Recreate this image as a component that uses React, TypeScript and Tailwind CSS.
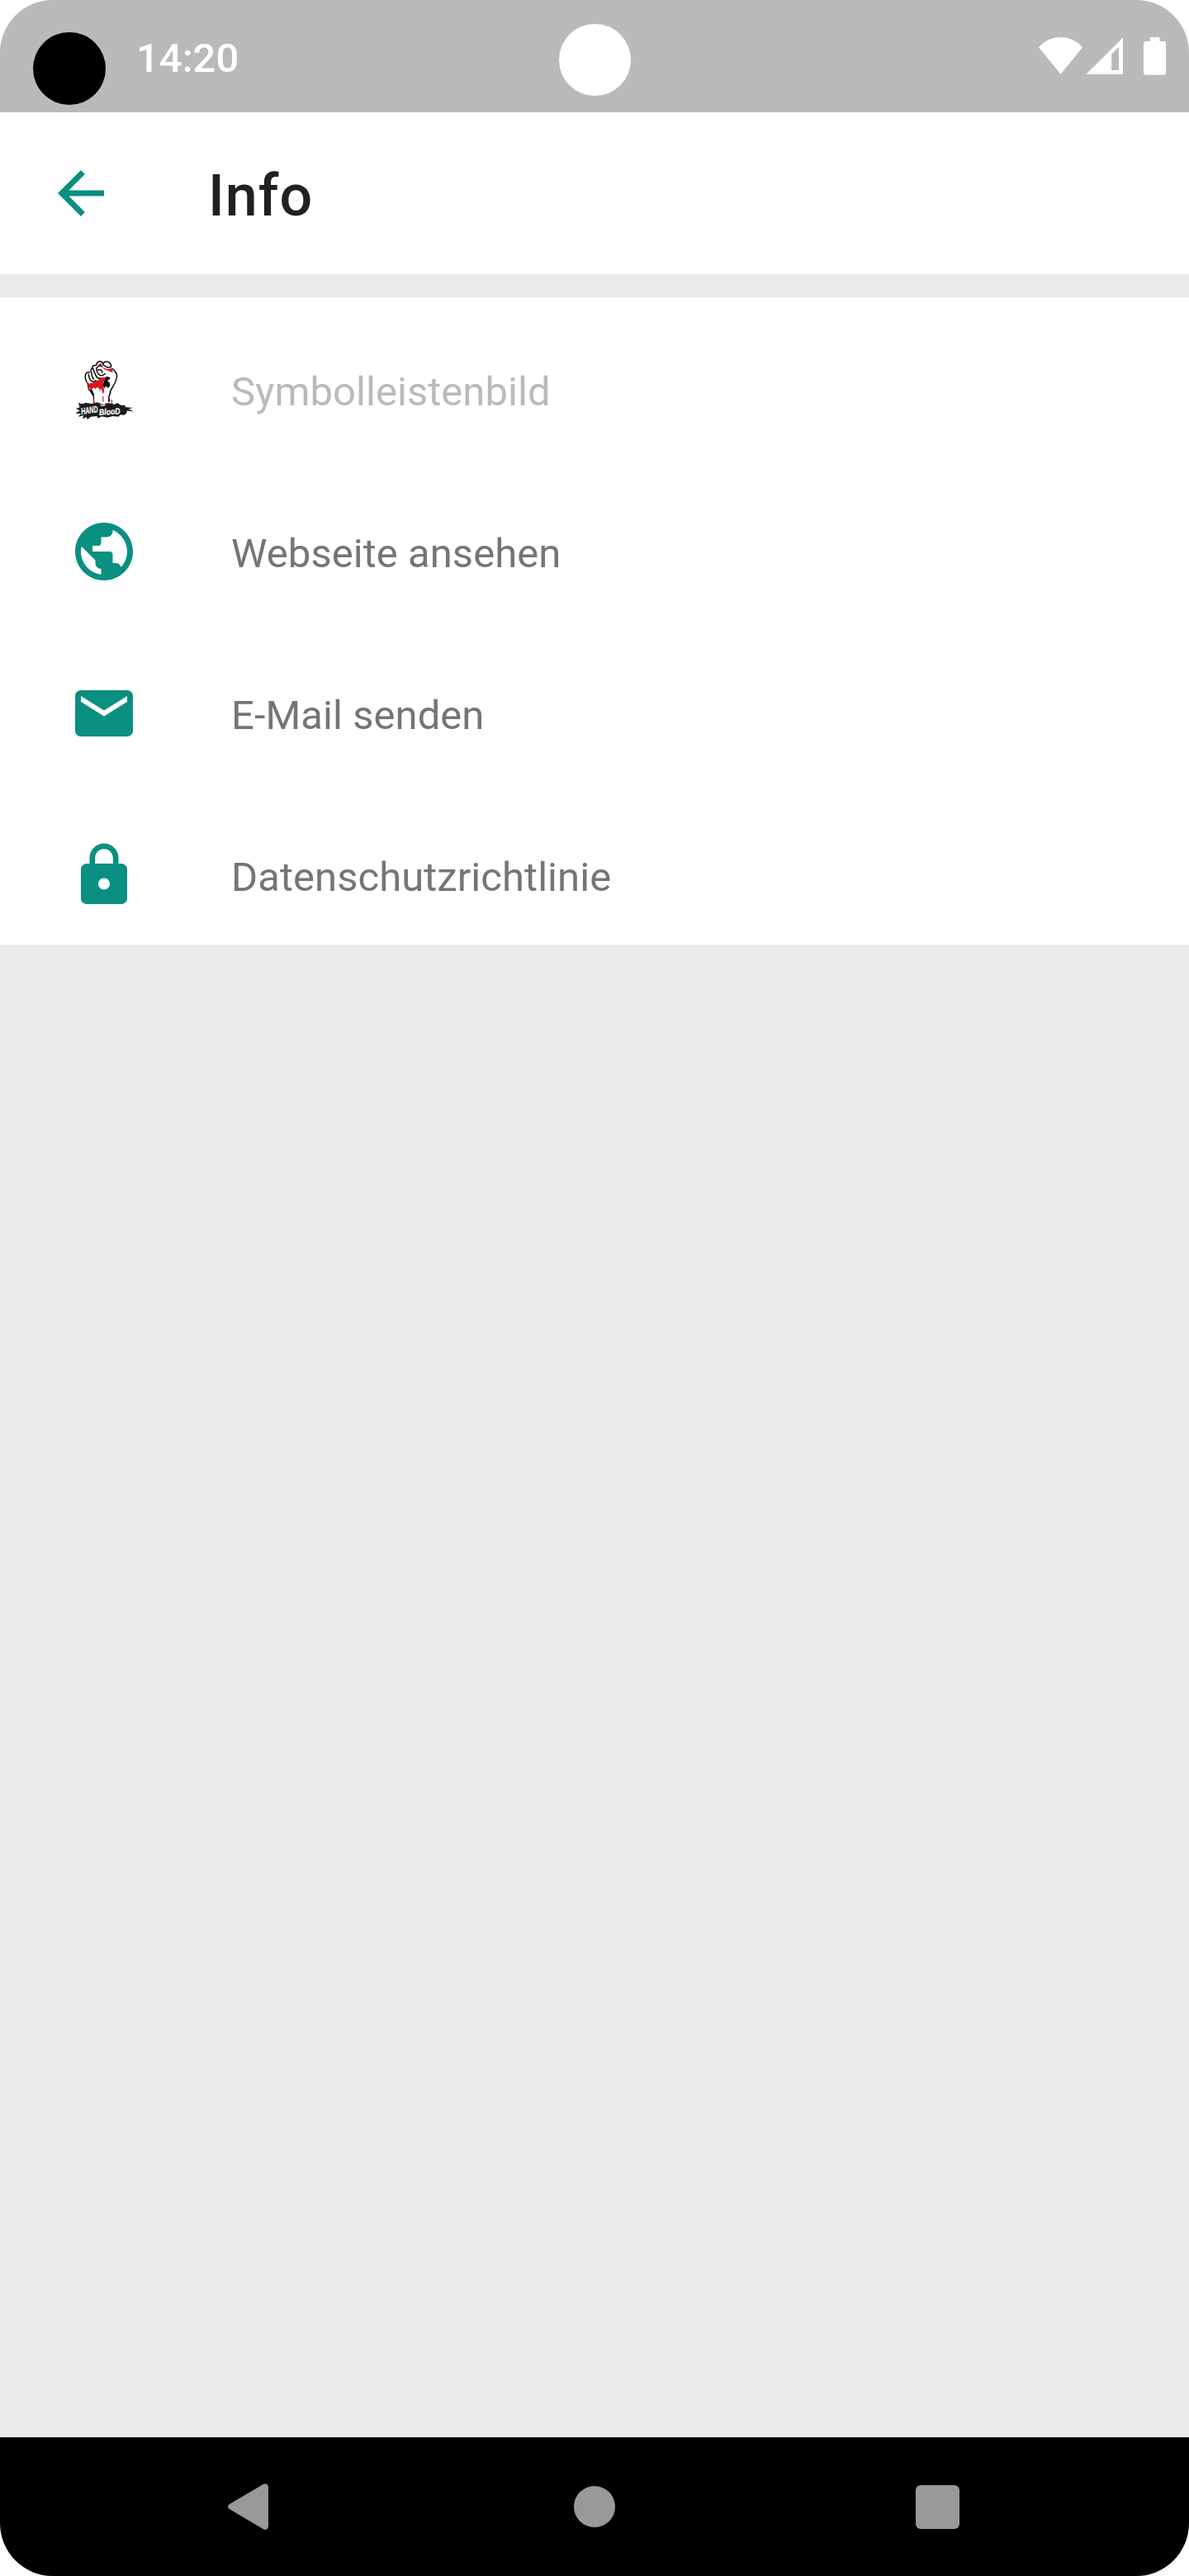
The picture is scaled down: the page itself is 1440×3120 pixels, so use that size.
import type { ReactNode } from "react";

function FistLogo() {
  return (
    <svg viewBox="12 30 252 252" className="size-[84px]">
      <path
        d="M88 205 L76 150 Q66 118 72 98 Q76 88 92 90 L90 80 Q88 70 106 67 Q110 50 126 52 L132 56 Q140 46 156 54 Q166 62 166 76 Q184 84 187 104 Q186 130 166 152 L160 172 L170 212 Z"
        fill="#fff"
      />
      <path d="M76 132 Q92 136 106 126 Q118 122 128 112 L146 110 L136 130 L137 150 L139 166 L134 170 L131 158 L125 152 L123 164 L120 150 L112 148 L106 154 L100 148 L92 156 L82 146 Z" fill="#d71920" />
      <path d="M132 74 L150 82 L166 78 L170 94 L160 90 L150 86 L138 82 Z M119 62 L130 60 L128 68 L118 68 Z" fill="#d71920" />
      <path d="M146 108 L158 110 L160 116 L150 124 L158 130 L160 142 L152 150 L144 142 L141 152 L134 140 L138 126 Z M88 150 L96 158 L103 176 L98 178 L90 164 Z M160 160 L164 166 L158 182 L160 200 L153 200 L154 180 Z" fill="#0b0b0b" />
      <g fill="none" stroke="#0b0b0b" strokeWidth="4.5" strokeLinecap="round" strokeLinejoin="round">
        <path d="M75 128 Q66 108 72 98 Q78 90 85 93 M82 100 Q82 116 92 124 Q100 130 108 122" />
        <path d="M91 92 Q88 78 98 79 Q102 92 108 104 Q114 118 124 114 M92 92 Q92 106 100 118" />
        <path d="M95 76 Q94 68 110 67 M110 67 Q112 52 124 53 Q132 54 134 62 M110 78 Q112 98 124 104 Q136 106 142 98" />
        <path d="M112 76 Q120 64 132 72 M116 84 Q130 80 132 94" />
        <path d="M134 66 Q136 52 150 54 Q164 58 164 72 M138 68 L148 74 L162 74" />
        <path d="M168 80 Q184 92 185 108 Q182 128 168 148 L160 164" />
        <path d="M78 132 L82 152 L90 164 L100 180 L101 202" strokeWidth="4" />
      </g>
      <path d="M80 130 L82 160 M166 192 L167 216 M100 190 L102 206 M134 180 L135 200" stroke="#d71920" strokeWidth="3.5" fill="none" />
      <path
        d="M44 204 L62 208 L70 203 L94 207 L112 202 L132 208 L154 204 L176 209 L186 204 L200 212 L216 213 L214 219 L244 222 L228 226 L246 236 L222 232 L218 244 L210 248 L198 247 L190 254 L170 252 L150 257 L130 253 L116 260 L112 252 L90 254 L78 264 L74 256 L60 262 L64 250 L44 254 L54 243 L34 242 L50 232 L36 224 L50 220 Z"
        fill="#1c1c1c"
      />
      <g fill="#fff" stroke="#fff" strokeWidth="0.6" fontFamily="Liberation Sans, sans-serif" fontWeight="700" fontStyle="italic">
        <text x="56" y="247" fontSize="34" textLength="62" lengthAdjust="spacingAndGlyphs" transform="rotate(-9 56 247)">HAND</text>
        <text x="125" y="217" fontSize="16" textLength="19" lengthAdjust="spacingAndGlyphs">OF</text>
        <text x="121" y="249" fontSize="31" textLength="76" lengthAdjust="spacingAndGlyphs" transform="rotate(-4 121 249)">BlooD</text>
      </g>
    </svg>
  );
}

function Icon({ d }: { d: string }) {
  return (
    <svg viewBox="0 0 24 24" className="size-[84px] fill-[#0a8f80]">
      <path d={d} />
    </svg>
  );
}

function Row({ icon, label, muted }: { icon: ReactNode; label: string; muted?: boolean }) {
  return (
    <li className="flex h-[196px] shrink-0 items-center gap-28 pl-[84px]">
      {icon}
      <span
        className={
          muted
            ? "pt-1 text-[49px] leading-none tracking-[0.05px] text-[#bababa]"
            : "pt-1 text-[49px] leading-none tracking-[0.05px] text-[#757575]"
        }
      >
        {label}
      </span>
    </li>
  );
}

const GLOBE =
  "M12 2C6.48 2 2 6.48 2 12s4.48 10 10 10 10-4.48 10-10S17.52 2 12 2zm-1 17.93c-3.95-.49-7-3.85-7-7.93 0-.62.08-1.21.21-1.79L9 15v1c0 1.1.9 2 2 2v1.93zm6.9-2.54c-.26-.81-1-1.39-1.9-1.39h-1v-3c0-.55-.45-1-1-1H8v-2h2c.55 0 1-.45 1-1V7h2c1.1 0 2-.9 2-2v-.41c2.93 1.19 5 4.06 5 7.41 0 2.08-.8 3.97-2.1 5.39z";
const MAIL =
  "M20 4H4c-1.1 0-1.99.9-1.99 2L2 18c0 1.1.9 2 2 2h16c1.1 0 2-.9 2-2V6c0-1.1-.9-2-2-2zm0 4l-8 5-8-5V6l8 5 8-5v2z";
const LOCK =
  "M18 8h-1V6c0-2.76-2.24-5-5-5S7 3.24 7 6v2H6c-1.1 0-2 .9-2 2v10c0 1.1.9 2 2 2h12c1.1 0 2-.9 2-2V10c0-1.1-.9-2-2-2zm-6 9c-1.1 0-2-.9-2-2s.9-2 2-2 2 .9 2 2-.9 2-2 2zm3.1-9H8.9V6c0-1.71 1.39-3.1 3.1-3.1 1.71 0 3.1 1.39 3.1 3.1v2z";
const BACK = "M20 11H7.83l5.59-5.59L12 4l-8 8 8 8 1.41-1.41L7.83 13H20v-2z";

export default function App() {
  return (
    <div className="bg-white">
      <div className="flex h-[3120px] w-[1440px] flex-col overflow-hidden rounded-[64px] bg-[#ebebeb] font-[Roboto,sans-serif]">
        <header className="relative flex h-[136px] shrink-0 items-start justify-between bg-[#bababa] pr-7 pl-10">
          <div className="flex items-start">
            <div className="mt-[39px] size-[88px] rounded-full bg-black" />
            <span className="mt-[46px] ml-[37px] text-[49px] leading-[50px] font-medium text-white">14:20</span>
          </div>
          <div className="absolute top-[29px] left-[677px] size-[87px] rounded-full bg-white" />
          <div className="mt-[45px] flex items-start text-white">
            <svg viewBox="0 0 53 45" className="h-[45px] w-[53px] fill-current">
              <path d="M0 12.3 Q11 0 26.5 0 T53 12.3 L26.5 44.7 Z" />
            </svg>
            <svg viewBox="0 0 45 45" className="ml-1 h-[45px] w-[45px] fill-current">
              <path fillRule="evenodd" d="M45 .5 V45 H.3 Z M31.2 20.5 V40 H40 V11.7 Z" />
            </svg>
            <svg viewBox="0 0 27 46" className="ml-[25px] h-[46px] w-[27px] fill-current">
              <path d="M8 0 H19.5 V5 H24 Q27 5 27 8 V42.5 Q27 45.7 24 45.7 H3 Q0 45.7 0 42.5 V8 Q0 5 3 5 H8 Z" />
            </svg>
          </div>
        </header>

        <div className="flex h-[196px] shrink-0 items-center gap-28 bg-white pl-14">
          <Icon d={BACK} />
          <h1 className="pt-1.5 text-[70px] leading-none font-medium tracking-[1px] text-[#212121]">Info</h1>
        </div>

        <ul className="mt-7 flex h-[784px] shrink-0 flex-col overflow-hidden bg-white pt-3.5">
          <Row icon={<FistLogo />} label="Symbolleistenbild" muted />
          <Row icon={<Icon d={GLOBE} />} label="Webseite ansehen" />
          <Row icon={<Icon d={MAIL} />} label="E-Mail senden" />
          <Row icon={<Icon d={LOCK} />} label="Datenschutzrichtlinie" />
        </ul>

        <nav className="mt-auto flex h-[168px] shrink-0 items-center bg-black pl-[276px]">
          <svg viewBox="0 0 49 56" className="h-14 w-[49px] fill-[#999]">
            <path d="M43 .8 Q45 -.5 47.2 .8 Q49 2 49 4.5 V51.5 Q49 54 47.2 55.2 Q45 56.5 43 55.2 L2 31 Q0 29.7 0 28 T2 25 Z" />
          </svg>
          <div className="ml-[370px] size-[50px] rounded-full bg-[#999]" />
          <div className="ml-[364px] size-[53px] rounded-md bg-[#999]" />
        </nav>
      </div>
    </div>
  );
}
